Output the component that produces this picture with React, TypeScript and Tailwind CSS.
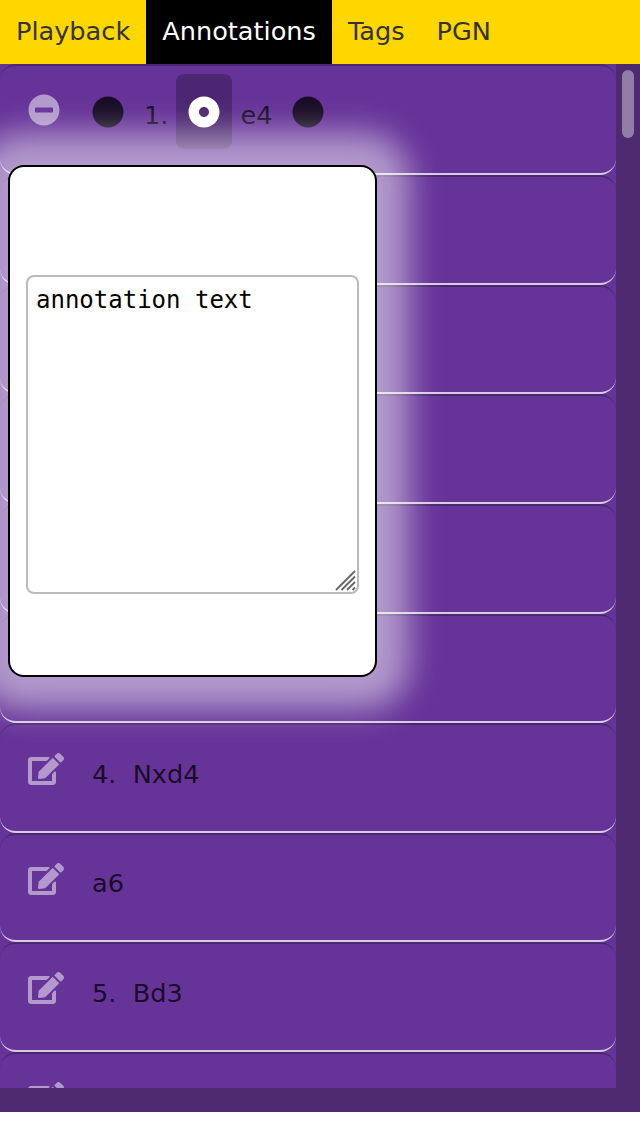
import { FaCircle, FaDotCircle, FaEdit, FaMinusCircle } from "react-icons/fa";

const tabs = ["Playback", "Annotations", "Tags", "PGN"];
const moves = ["", "", "", "", "", "4.  Nxd4", "a6", "5.  Bd3", ""];

function TabBar() {
  return (
    <nav className="flex h-16 shrink-0 bg-[#ffd700] text-[#333333]">
      {tabs.map((tab) => (
        <div
          key={tab}
          className={
            tab === "Annotations"
              ? "flex h-16 items-center bg-black px-4 pb-0.5 text-white"
              : "flex h-16 items-center px-4 pb-0.5"
          }
        >
          {tab}
        </div>
      ))}
    </nav>
  );
}

function ActiveRow() {
  return (
    <div className="flex h-[111.2px] shrink-0 items-start rounded-2xl border-y-2 border-t-black/25 border-b-white/75 pl-7 text-black/75">
      <FaMinusCircle className="mt-[28.4px] size-8 text-white/50" />
      <FaCircle className="mt-[30.2px] ml-[31.7px] size-8" />
      <span className="mt-[30px] ml-[20.3px] w-8 leading-[38px]">1.</span>
      <div className="mt-2 flex h-[75px] w-14 items-center justify-center rounded-lg bg-black/25">
        <FaDotCircle className="ml-[0.7px] size-8 text-white" />
      </div>
      <span className="mt-[30px] ml-[8.5px] w-[51.8px] leading-[38px]">e4</span>
      <FaCircle className="mt-[30.2px] size-8" />
    </div>
  );
}

function MoveRow({ move }: { move: string }) {
  return (
    <div className="flex h-[109.6px] shrink-0 items-start rounded-2xl border-y-2 border-t-black/25 border-b-white/75 pl-7">
      <FaEdit className="mt-[28px] h-8 w-9 text-white/50" />
      <span className="mt-[29.4px] ml-7 leading-[38px] whitespace-pre text-black/75">{move}</span>
    </div>
  );
}

function AnnotationDialog() {
  return (
    <div className="absolute top-[101.4px] left-2 flex h-[511.6px] w-[369.4px] items-start rounded-2xl border-2 border-black bg-white px-4 pt-[107.3px] shadow-[0_0_32px_32px_rgba(255,255,255,0.5)]">
      <div className="relative h-[319px] w-[333.4px] shrink-0">
        <textarea
          className="block size-full resize-none rounded-lg border-2 border-[#bbbbbb] bg-white p-2 pt-[7.3px] font-['DejaVu_Sans_Mono',monospace] text-2xl leading-8 text-black outline-none"
          defaultValue="annotation text"
        />
        <svg
          className="absolute right-[3px] bottom-[3px] size-[21px]"
          viewBox="0 0 21 21"
          stroke="#666"
          strokeWidth="1.8"
        >
          <path d="M1 20 20 1M6.5 20 20 6.5M12 20l8-8M17.5 20l2.5-2.5" />
        </svg>
      </div>
    </div>
  );
}

export default function App() {
  return (
    <div className="flex h-[1136px] w-[640px] flex-col overflow-hidden bg-white font-['DejaVu_Sans',sans-serif] text-[25.6px]">
      <TabBar />
      <main className="relative flex h-[1048px] flex-col overflow-hidden bg-[#4d2a70]">
        <div className="flex h-[1024px]">
          <div className="flex w-[616px] flex-col overflow-hidden bg-[#663399]">
            <ActiveRow />
            {moves.map((move, index) => (
              <MoveRow key={index} move={move} />
            ))}
          </div>
          <div className="w-6 px-1.5 pt-1.5">
            <div className="h-[68px] w-3 rounded-full bg-[#927ba7]" />
          </div>
        </div>
        <AnnotationDialog />
      </main>
    </div>
  );
}
